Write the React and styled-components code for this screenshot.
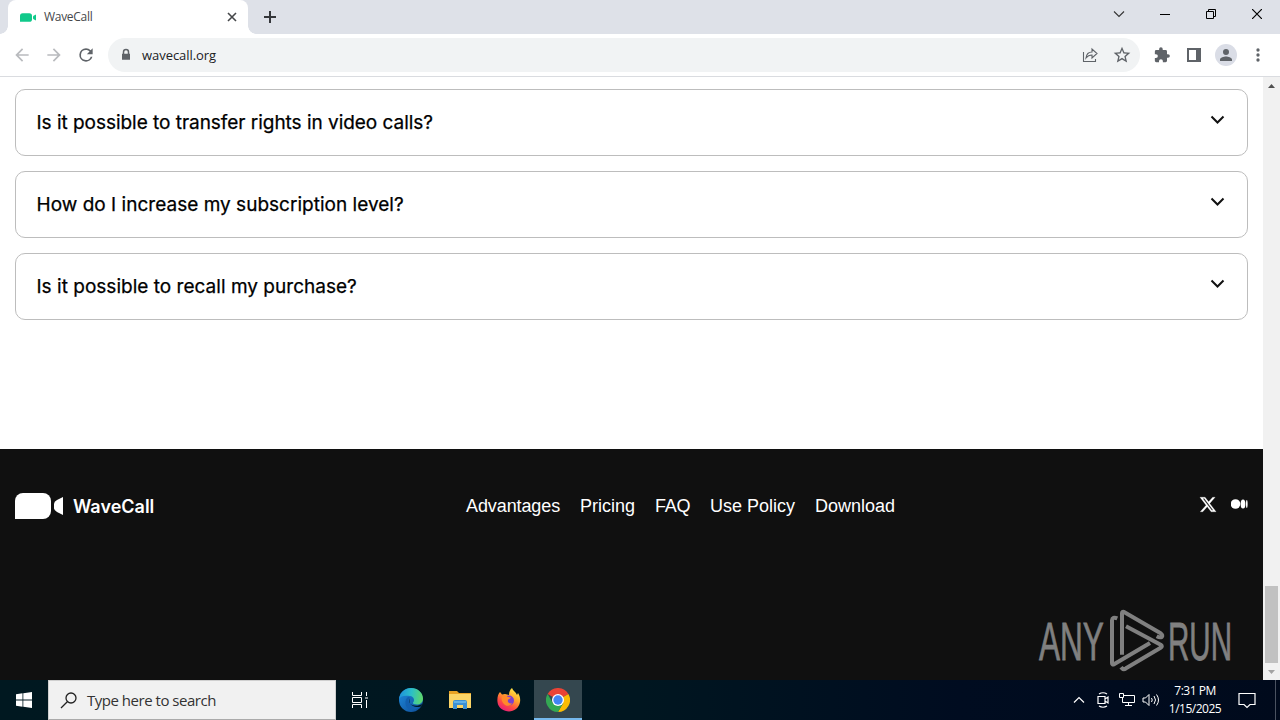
import styled, { createGlobalStyle } from "styled-components";

const GlobalStyle = createGlobalStyle`
  * {
    box-sizing: border-box;
  }
  body {
    margin: 0;
    overflow: hidden;
    background: #fff;
  }
`;

const Screen = styled.div`
  width: 1280px;
  height: 720px;
  display: flex;
  flex-direction: column;
  overflow: hidden;
  font-family: "Open Sans", sans-serif;
  svg {
    display: block;
    flex: none;
  }
`;

const TabStrip = styled.div`
  height: 34px;
  flex: none;
  display: flex;
  align-items: stretch;
  background: #dee1e8;
`;

const TabCorner = styled.div`
  width: 8px;
  background: radial-gradient(
    circle at ${(props) => (props.side === "left" ? "0" : "100%")} 26px,
    #dee1e8 7.5px,
    #fff 8px
  );
  background-size: 8px 34px;
  clip-path: inset(26px 0 0 0);
`;

const Tab = styled.div`
  width: 240px;
  display: flex;
  align-items: center;
  padding: 0 10px 0 12px;
  background: #fff;
  border-radius: 8px 8px 0 0;
`;

const TabTitle = styled.div`
  flex: 1;
  margin-left: 8px;
  font-size: 12px;
  line-height: 16px;
  letter-spacing: -0.3px;
  color: #45474a;
`;

const NewTab = styled.div`
  display: flex;
  align-items: center;
  margin-left: 8px;
`;

const WindowButtons = styled.div`
  margin-left: auto;
  display: flex;
`;

const WindowButton = styled.div`
  width: 46px;
  height: 28px;
  display: flex;
  align-items: center;
  justify-content: center;
`;

const Toolbar = styled.div`
  height: 43px;
  flex: none;
  display: flex;
  align-items: center;
  padding-left: 12px;
  background: #fff;
  border-bottom: 1px solid #dadce0;
`;

const NavButtons = styled.div`
  display: flex;
  gap: 12px;
  width: 96px;
`;

const AddressBar = styled.div`
  width: 1032px;
  height: 34px;
  display: flex;
  align-items: center;
  padding: 0 8px;
  border-radius: 17px;
  background: #f1f3f4;
`;

const Url = styled.div`
  flex: 1;
  margin-left: 6px;
  font-size: 13px;
  line-height: 18px;
  letter-spacing: -0.05px;
  color: #202124;
`;

const AddressIcons = styled.div`
  display: flex;
  gap: 12px;
`;

const Extensions = styled.div`
  display: flex;
  align-items: center;
  gap: 12px;
  margin-left: 12px;
`;

const Avatar = styled.div`
  width: 22px;
  height: 22px;
  display: flex;
  align-items: center;
  justify-content: center;
  margin: 0 -1px;
  border-radius: 50%;
  background: #dadde6;
`;

const Viewport = styled.div`
  height: 603px;
  flex: none;
  display: flex;
`;

const Page = styled.div`
  width: 1263px;
  display: flex;
  flex-direction: column;
  background: #fff;
  font-family: Inter, sans-serif;
`;

const Questions = styled.div`
  height: 372px;
  display: flex;
  flex-direction: column;
  gap: 15px;
  padding: 12px 15px 0;
`;

const Question = styled.div`
  height: 67px;
  display: flex;
  justify-content: space-between;
  padding: 19px 20px;
  border: 1px solid #bdbdbd;
  border-radius: 10px;
`;

const QuestionText = styled.div`
  padding-left: 0.5px;
  font-size: 19px;
  font-weight: 400;
  line-height: 27px;
  letter-spacing: ${(props) => props.spacing || "0"};
  -webkit-text-stroke: 0.25px #000;
  color: #000;
  white-space: nowrap;
`;

const Footer = styled.div`
  position: relative;
  flex: 1;
  display: flex;
  align-items: flex-start;
  padding: 44px 15px 0;
  background: #101010;
  color: #fff;
`;

const Brand = styled.div`
  width: 451px;
  display: flex;
  align-items: center;
  gap: 10px;
`;

const BrandName = styled.div`
  padding-top: 2px;
  font-size: 18px;
  font-weight: 600;
  line-height: 24px;
`;

const Links = styled.div`
  display: flex;
  gap: 20px;
`;

const FooterLink = styled.div`
  width: ${(props) => props.w}px;
  font-family: "Liberation Sans", Arial, sans-serif;
  font-size: 18px;
  line-height: 26px;
  letter-spacing: ${(props) => props.spacing || "0"};
  white-space: nowrap;
`;

const Socials = styled.div`
  display: flex;
  align-items: center;
  gap: 14px;
  height: 22px;
  margin-left: auto;
`;

const Watermark = styled.svg`
  position: absolute;
  right: 20px;
  bottom: 6px;
  overflow: visible;
  font-family: "Liberation Sans", Arial, sans-serif;
  font-size: 54px;
`;

const Scrollbar = styled.div`
  width: 17px;
  display: flex;
  flex-direction: column;
  align-items: center;
  background: #f1f1f1;
`;

const ScrollArrow = styled.div`
  width: 17px;
  height: 17px;
  display: flex;
  align-items: center;
  justify-content: center;
`;

const Thumb = styled.div`
  width: 13px;
  height: 77px;
  margin-top: auto;
  background: #c1c1c1;
`;

const Taskbar = styled.div`
  height: 40px;
  flex: none;
  display: flex;
  background: linear-gradient(90deg, #001820 0%, #001620 50%, #000c20 75%, #000a1c 100%);
`;

const TaskButton = styled.div`
  width: ${(props) => props.w || 48}px;
  display: flex;
  align-items: center;
  justify-content: center;
  background: ${(props) => (props.active ? "#34474f" : "transparent")};
  box-shadow: ${(props) => (props.active ? "inset 0 -2px #76b9ed" : "none")};
`;

const Pinned = styled.div`
  display: flex;
  gap: 1px;
  margin-left: 3px;
`;

const SearchBox = styled.div`
  width: 288px;
  display: flex;
  align-items: center;
  padding-left: 11px;
  gap: 10px;
  background: #f1f1f1;
  border: 1px solid #cfcfcf;
  border-bottom-color: #aaa;
  font-size: 15px;
  letter-spacing: -0.48px;
  color: #333;
`;

const Tray = styled.div`
  display: flex;
  margin-left: auto;
`;

const Clock = styled.div`
  width: 64px;
  padding-top: 2px;
  font-size: 12px;
  line-height: 18px;
  letter-spacing: -0.5px;
  text-align: center;
  white-space: nowrap;
  color: #fff;
`;

const ShowDesktop = styled.div`
  width: 5px;
  margin-left: 8px;
  border-left: 1px solid #4a5260;
`;

const questions = [
  { text: "Is it possible to transfer rights in video calls?", spacing: "-0.03px" },
  { text: "How do I increase my subscription level?", spacing: "0.02px" },
  { text: "Is it possible to recall my purchase?", spacing: "0.02px" },
];

const links = [
  { text: "Advantages", w: 94, spacing: "-0.1px" },
  { text: "Pricing", w: 55 },
  { text: "FAQ", w: 35, spacing: "-0.3px" },
  { text: "Use Policy", w: 85 },
  { text: "Download", w: 80 },
];

const Camera = ({ width, height, color }) => (
  <svg width={width} height={height} viewBox="0 0 48 26">
    <path fill={color} d="M0 26V8a8 8 0 0 1 8-8h20a8 8 0 0 1 8 8v10a8 8 0 0 1-8 8z" />
    <path fill={color} d="M48 4v18l-6-3q-3-1.500-3-4v-4q0-2.500 3-4z" />
  </svg>
);

const Glyph = ({ d, size = 20, color = "#5f6368" }) => (
  <svg width={size} height={size} viewBox="0 0 24 24" fill={color}>
    <path d={d} />
  </svg>
);

const Line = ({ d, w = 16, h = 16, color = "#fff", stroke = 1 }) => (
  <svg width={w} height={h} viewBox={`0 0 ${w} ${h}`} fill="none" stroke={color} strokeWidth={stroke}>
    <path d={d} />
  </svg>
);

const Edge = () => (
  <svg width="24" height="24" viewBox="0 0 24 24">
    <defs>
      <linearGradient id="edgeTop" x1="0" x2="1" y1="0.4" y2="0.5">
        <stop offset="0" stopColor="#1e90dc" />
        <stop offset="0.5" stopColor="#2bbfc8" />
        <stop offset="1" stopColor="#5fd868" />
      </linearGradient>
      <linearGradient id="edgeBottom" x1="0" x2="1" y1="0" y2="1">
        <stop offset="0" stopColor="#1f8de0" />
        <stop offset="1" stopColor="#0d4a94" />
      </linearGradient>
    </defs>
    <circle cx="12" cy="12" r="12" fill="url(#edgeBottom)" />
    <path fill="url(#edgeTop)" d="M0 11C1 4 6 0 12 0c7 0 12 5 12 10.500 0 4-3 6-6 6-3 0-4.500-1-4-2 2-2 1-6-3-6.500C6 7 1 8 0 11z" />
    <path fill="#1260b0" d="M9 9c-4 3-3 10 1 12.500 4 1.500 8 0 11-3.500-4 2-8 1-10-1.500C9 14 9 11 11 9z" />
    <path fill="#001a24" d="M11.500 10c-2.500 2-1.500 5.500 1.500 7 3 1.300 7 1 10-1l-.5 2c-1 .8-3 1.200-5 1-4-.3-7-3-7-6 0-1.500.3-2.500 1-3z" />
  </svg>
);

const Explorer = () => (
  <svg width="22" height="20" viewBox="0 0 22 20">
    <path fill="#e8a224" d="M0 1h8l2 2h12v5H0z" />
    <path fill="#fbd466" d="M0 4h22v14H0z" />
    <path fill="#3b90d4" d="M4 19v-7q0-2 2-2h10q2 0 2 2v7h-4v-4H8v4z" />
    <path fill="#5fb0e8" d="M5 11h12v2H5z" />
  </svg>
);

const Firefox = () => (
  <svg width="24" height="24" viewBox="0 0 24 24">
    <defs>
      <linearGradient id="fox" x1="0.8" x2="0.25" y1="0" y2="1">
        <stop offset="0" stopColor="#fff04a" />
        <stop offset="0.4" stopColor="#ffa52c" />
        <stop offset="0.7" stopColor="#ff4b42" />
        <stop offset="1" stopColor="#e6187e" />
      </linearGradient>
    </defs>
    <path fill="url(#fox)" d="M3 4l2 2.500 3-.5 4 1c0-3 1-5.500 3-7 1 3 4 4 5 7l1-2c2 3 2.500 6 2 9-1 6-6 9.500-11 9.500S1 20 .5 14C0 10 1 6 3 4z" />
    <circle cx="12" cy="12.500" r="5" fill="#7b3fd0" />
    <path fill="#ff8a2a" d="M5 8c3-1 5 0 6 1l3 .5c-1 1.500-3 1.500-3 2.500-1 3 2 4 4 3-1 3-6 4-8 1-2-2-3-5-2-8z" />
  </svg>
);

const Chrome = () => (
  <svg width="24" height="24" viewBox="0 0 24 24">
    <path fill="#ea4335" d="M12 12L1.600 6a12 12 0 0 1 20.800 0z" />
    <path fill="#fbbc04" d="M12 12l10.400-6A12 12 0 0 1 12 24l5.200-9z" />
    <path fill="#34a853" d="M12 12l5.200 3L12 24A12 12 0 0 1 1.600 6l5.200 9z" />
    <path fill="#ea4335" d="M12 6h10.400L12 7z" />
    <circle cx="12" cy="12" r="6" fill="#fff" />
    <circle cx="12" cy="12" r="4.700" fill="#4285f4" />
  </svg>
);

const AnyRun = () => (
  <Watermark width="204" height="66" viewBox="0 0 204 66">
    <g fill="#808080" stroke="#808080" strokeWidth=".8">
      <text transform="translate(0 52) scale(.585 1)">ANY</text>
      <text transform="translate(129 52) scale(.547 1)">RUN</text>
    </g>
    <g
      transform="translate(61 -4) scale(.3333)"
      fill="none"
      stroke="#808080"
      strokeWidth="12"
      strokeLinejoin="round"
    >
      <path d="M52 43q-15-6-16 6v128q0 6 6 4l108-64" />
      <path d="M66 152V28q0-6 6-4l110 64q8 6 3 11-5 3-15-2" />
      <path d="M78 67l104 55q7 5 0 9L78 193q-8 6-15-3" />
    </g>
  </Watermark>
);

const App = () => {
  return (
    <Screen>
      <GlobalStyle />
      <TabStrip>
        <TabCorner side="left" />
        <Tab>
          <Camera width={16} height={9} color="#10c98a" />
          <TabTitle>WaveCall</TabTitle>
          <Line w={12} h={12} color="#45474a" stroke={1.6} d="M2 2l8 8M10 2l-8 8" />
        </Tab>
        <TabCorner side="right" />
        <NewTab>
          <Line w={12} h={12} color="#35373b" stroke={2} d="M6 0v12M0 6h12" />
        </NewTab>
        <WindowButtons>
          <WindowButton>
            <Line w={12} h={12} color="#333" stroke={1.1} d="M1 3.500l5 5 5-5" />
          </WindowButton>
          <WindowButton>
            <Line w={10} h={10} color="#000" d="M0 5.500h10" />
          </WindowButton>
          <WindowButton>
            <Line w={10} h={10} color="#000" d="M.5 2.500h7v7h-7zM2.500 2.500v-2h7v7h-2" />
          </WindowButton>
          <WindowButton>
            <Line w={10} h={10} color="#000" stroke={1.2} d="M0 0l10 10M10 0L0 10" />
          </WindowButton>
        </WindowButtons>
      </TabStrip>
      <Toolbar>
        <NavButtons>
          <Glyph color="#b9bbbe" d="M20 11H7.830l5.590-5.590L12 4l-8 8 8 8 1.410-1.410L7.830 13H20v-2z" />
          <Glyph color="#b9bbbe" d="M12 4l-1.410 1.410L16.170 11H4v2h12.170l-5.580 5.590L12 20l8-8z" />
          <Glyph d="M17.650 6.350A7.960 7.960 0 0 0 12 4a8 8 0 1 0 7.730 10h-2.080A6 6 0 1 1 12 6c1.660 0 3.140.69 4.220 1.780L13 11h7V4l-2.350 2.350z" />
        </NavButtons>
        <AddressBar>
          <Line w={20} h={14} color="#5f6368" stroke={1.5} d="M7.500 6V4a2.500 2.500 0 0 1 5 0v2M6 6.500h8M6 8h8M6 9.500h8M6 11h8" />
          <Url>wavecall.org</Url>
          <AddressIcons>
            <Line w={20} h={20} color="#5f6368" stroke={1.1} d="M3.500 7v9.500h12V14M6 13c.5-4 3-6 6-6V4l5 4.500-5 4.500v-3c-3 0-4.500 1-6 3z" />
            <Glyph d="M22 9.240l-7.190-.62L12 2 9.190 8.630 2 9.240l5.460 4.730L5.820 21 12 17.270 18.180 21l-1.630-7.030L22 9.240zM12 15.400l-3.760 2.270 1-4.280-3.320-2.880 4.380-.38L12 6.100l1.710 4.040 4.380.38-3.320 2.880 1 4.280L12 15.400z" size={20} />
          </AddressIcons>
        </AddressBar>
        <Extensions>
          <svg width="20" height="20" viewBox="-2 -2 28 28">
            <path fill="#5f6368" d="M20.500 11H19V7a2 2 0 0 0-2-2h-4V3.500a2.500 2.500 0 0 0-5 0V5H4a2 2 0 0 0-2 2v3.800h1.500a2.700 2.700 0 0 1 0 5.400H2V20c0 1.100.9 2 2 2h3.800v-1.500a2.700 2.700 0 0 1 5.400 0V22H17a2 2 0 0 0 2-2v-4h1.500a2.500 2.500 0 0 0 0-5z" />
          </svg>
          <svg width="20" height="20" viewBox="0 0 20 20">
            <path fill="#5f6368" fillRule="evenodd" d="M3 3h14v14H3zM5 5v10h7V5z" />
          </svg>
          <Avatar>
            <Glyph size={18} d="M12 12a4 4 0 1 0 0-8 4 4 0 0 0 0 8zm0 2c-2.670 0-8 1.340-8 4v2h16v-2c0-2.660-5.330-4-8-4z" />
          </Avatar>
          <Glyph size={20} d="M12 8a2 2 0 1 0 0-4 2 2 0 0 0 0 4zm0 2a2 2 0 1 0 0 4 2 2 0 0 0 0-4zm0 6a2 2 0 1 0 0 4 2 2 0 0 0 0-4z" />
        </Extensions>
      </Toolbar>
      <Viewport>
        <Page>
          <Questions>
            {questions.map((item) => (
              <Question key={item.text}>
                <QuestionText spacing={item.spacing}>{item.text}</QuestionText>
                <Line w={17} h={18} color="#111" stroke={2} d="M1.500 7.500l6 6 6-6" />
              </Question>
            ))}
          </Questions>
          <Footer>
            <Brand>
              <Camera width={48} height={26} color="#fff" />
              <BrandName>WaveCall</BrandName>
            </Brand>
            <Links>
              {links.map((item) => (
                <FooterLink key={item.text} w={item.w} spacing={item.spacing}>
                  {item.text}
                </FooterLink>
              ))}
            </Links>
            <Socials>
              <svg width="18" height="17" viewBox="0 0 24 22">
                <path fill="#fff" stroke="#fff" strokeWidth=".3" d="M18.244 1.250h3.308l-7.227 8.260 8.502 11.240H16.170l-5.214-6.817L4.990 20.750H1.680l7.730-8.835L1.254 1.250H8.080l4.713 6.231zm-1.161 17.520h1.833L7.084 3.126H5.117z" />
              </svg>
              <svg width="17" height="10" viewBox="0 0 17 10">
                <g fill="#fff">
                  <circle cx="4.500" cy="5" r="4.800" />
                  <ellipse cx="12" cy="5" rx="2.400" ry="4.500" />
                  <ellipse cx="15.800" cy="5" rx="0.800" ry="4" />
                </g>
              </svg>
            </Socials>
            <AnyRun />
          </Footer>
        </Page>
        <Scrollbar>
          <ScrollArrow>
            <svg width="7" height="4" viewBox="0 0 7 4">
              <path fill="#505050" d="M0 4l3.500-4L7 4z" />
            </svg>
          </ScrollArrow>
          <Thumb />
          <ScrollArrow>
            <svg width="7" height="4" viewBox="0 0 7 4">
              <path fill="#a3a3a3" d="M0 0l3.500 4L7 0z" />
            </svg>
          </ScrollArrow>
        </Scrollbar>
      </Viewport>
      <Taskbar>
        <TaskButton>
          <svg width="16" height="16" viewBox="0 0 16 16">
            <path fill="#fff" d="M0 2.200l6.500-.9v6.200H0zM7.300 1.200L16 0v7.500H7.300zM0 8.400h6.500v6.300L0 13.800zM7.300 8.400H16V16l-8.700-1.200z" />
          </svg>
        </TaskButton>
        <SearchBox>
          <Line w={17} h={17} color="#222" stroke={1.3} d="M16 6a5 5 0 1 1-10 0 5 5 0 0 1 10 0zM7.300 9.700L1 16" />
          Type here to search
        </SearchBox>
        <TaskButton>
          <Line w={18} h={16} d="M1.500 0v3.500h9V0M1.500 16v-3.500h9V16M1.500 5.500h9v5h-9zM15.500 0v4M15.500 8v8M14 6h3" />
        </TaskButton>
        <Pinned>
          <TaskButton>
            <Edge />
          </TaskButton>
          <TaskButton>
            <Explorer />
          </TaskButton>
          <TaskButton>
            <Firefox />
          </TaskButton>
          <TaskButton active>
            <Chrome />
          </TaskButton>
        </Pinned>
        <Tray>
          <TaskButton w={24}>
            <Line w={12} h={12} stroke={1.2} d="M1 8.500l5-5 5 5" />
          </TaskButton>
          <TaskButton w={24}>
            <Line stroke={1.2} d="M3 4.500h7v7H3zM10 7l3-2v6l-3-2M4 2q4-2.500 8 0M4 14q4 2.500 8 0" />
          </TaskButton>
          <TaskButton w={24}>
            <Line d="M5 3.500h10.500v7H3.500V6M.5 1.500h4v4h-4zM9.500 10.500v3M6 13.500h7" />
          </TaskButton>
          <TaskButton w={24}>
            <Line w={18} d="M1 6h2.500L7 2.500v11L3.500 10H1zM9.500 6q1.500 2 0 4M12 4q3 4 0 8M14.500 2.500q4 5.500 0 11" />
          </TaskButton>
          <Clock>
            7:31 PM
            <br />
            1/15/2025
          </Clock>
          <TaskButton w={40}>
            <Line w={18} h={18} stroke={1.2} d="M1 2.500h16v11h-5l-3 3-3-3H1z" />
          </TaskButton>
          <ShowDesktop />
        </Tray>
      </Taskbar>
    </Screen>
  );
};

export default App;
